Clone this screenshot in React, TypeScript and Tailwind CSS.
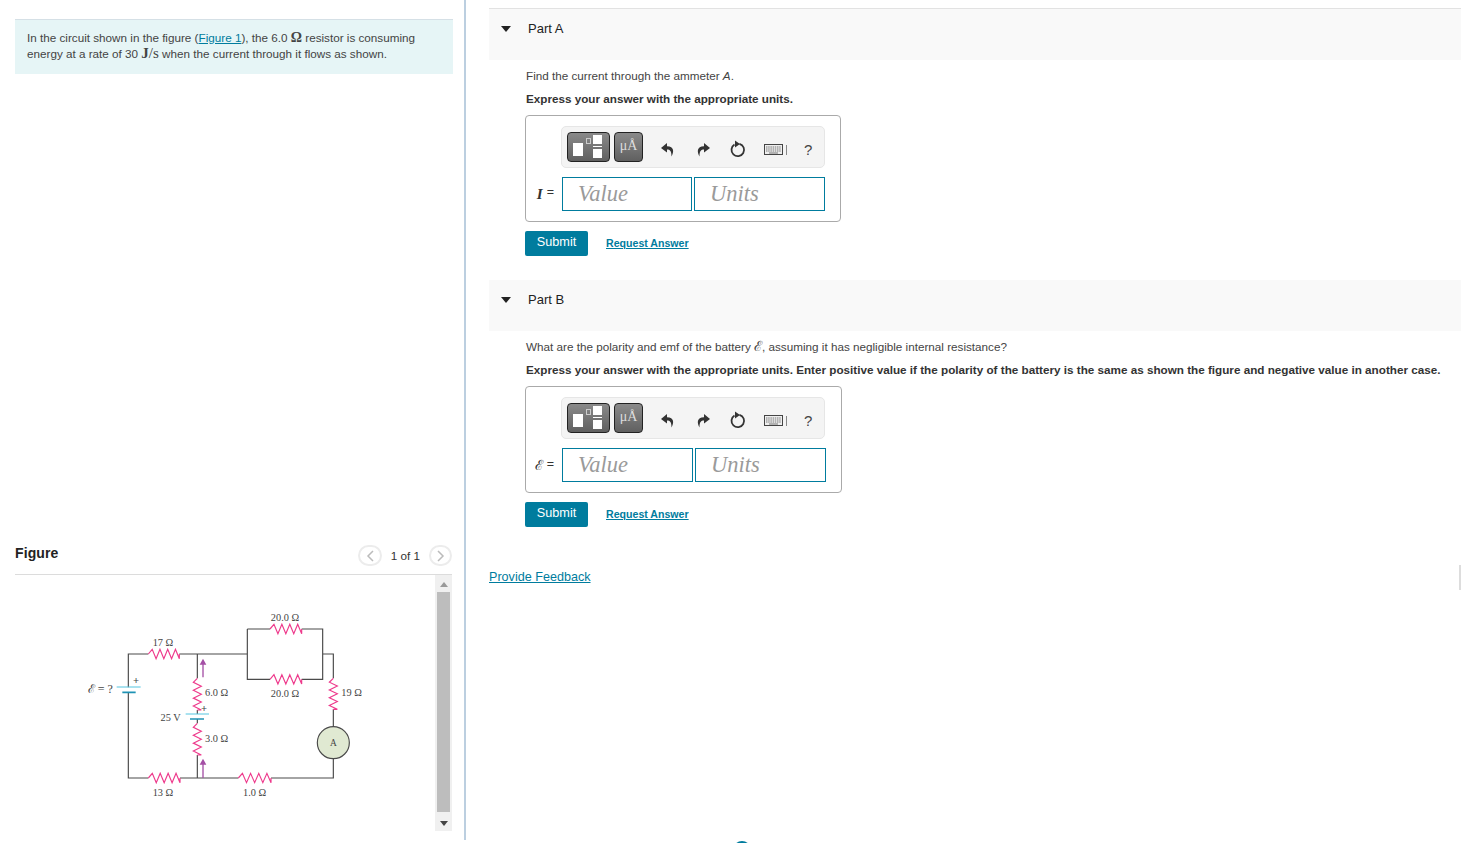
const serif = "[font-family:'Liberation_Serif',serif]";

// zigzag between two points along one axis, 4 peaks like the figure
function zigH(x1: number, x2: number, y: number) {
  const step = (x2 - x1) / 8;
  let d = `M${x1} ${y}`;
  for (let i = 1; i < 8; i += 2) {
    d += ` L${x1 + step * i} ${y - 14} L${x1 + step * (i + 1)} ${y + 14}`;
  }
  return d + ` L${x2} ${y}`;
}

function zigV(x: number, y1: number, y2: number) {
  const step = (y2 - y1) / 8;
  let d = `M${x} ${y1}`;
  for (let i = 1; i < 8; i += 2) {
    d += ` L${x - 12} ${y1 + step * i} L${x + 12} ${y1 + step * (i + 1)}`;
  }
  return d + ` L${x} ${y2}`;
}

function Circuit() {
  const labels: [string, number, number][] = [
    ["20.0 Ω", 645, 62],
    ["17 Ω", 279, 137],
    ["6.0 Ω", 440, 288],
    ["20.0 Ω", 645, 290],
    ["19 Ω", 845, 288],
    ["25 V", 302, 362],
    ["3.0 Ω", 440, 426],
    ["13 Ω", 279, 587],
    ["1.0 Ω", 554, 587],
  ];
  return (
    <svg width="310" height="210" viewBox="0 0 930 630" className="block">
      <path
        d="M175 262V162H235M328 162H532M532 87H600M695 87H758V238H695M600 238H532V87M758 162H790V235M790 328V380M790 476V534H603M505 534H330M235 534H175V277M382 162V235M382 330V342M382 357V370M382 465V534"
        fill="none"
        stroke="#4a4a4a"
        strokeWidth="3.500"
      />
      <g fill="none" stroke="#ee3a8c" strokeWidth="3.500">
        <path d={zigH(235, 328, 162)} />
        <path d={zigH(600, 695, 87)} />
        <path d={zigH(600, 695, 238)} />
        <path d={zigH(235, 330, 534)} />
        <path d={zigH(505, 603, 534)} />
        <path d={zigV(382, 235, 330)} />
        <path d={zigV(382, 370, 465)} />
        <path d={zigV(790, 235, 328)} />
      </g>
      <path d="M140 261H212M347 342H417" stroke="#55c5e0" strokeWidth="3" />
      <path d="M157 277H197M360 357H402" stroke="#1f93b5" strokeWidth="5" />
      <path d="M399 232V182M399 534V482" stroke="#a44fa5" strokeWidth="4" />
      <path d="M399 176L389 194H409ZM399 476L389 494H409Z" fill="#a44fa5" />
      <circle cx="790" cy="428" r="48" fill="#e0e9d2" stroke="#4a4a4a" strokeWidth="3.500" />
      <g fill="#444" className={serif} fontSize="31" textAnchor="middle">
        {labels.map(([t, x, y]) => (
          <text key={t + x} x={x} y={y}>
            {t}
          </text>
        ))}
        <text x="91" y="280" fontSize="36">
          ℰ = ?
        </text>
        <text x="790" y="438" fontSize="28">
          A
        </text>
        <text x="198" y="252" fontWeight="bold" fontSize="32">
          +
        </text>
        <text x="402" y="336" fontWeight="bold" fontSize="32">
          +
        </text>
      </g>
    </svg>
  );
}

function Toolbar() {
  return (
    <div className="ml-[35px] flex h-[42px] w-[264px] items-center rounded-[5px] border border-[#e6e6e6] bg-[#f4f4f4] pl-[5px]">
      <div className="flex h-[30px] w-[43px] items-center justify-center rounded-[4px] border border-[#222] bg-gradient-to-b from-[#8a8a8a] to-[#606060]">
        <svg width="33" height="26" viewBox="0 0 33 26">
          <rect x="1" y="9" width="10" height="13" fill="#fff" />
          <rect x="14.500" y="4.500" width="4" height="5" fill="none" stroke="#ccc" />
          <rect x="21" y="1" width="9" height="9" fill="#fff" />
          <rect x="21" y="12" width="9" height="1" fill="#fff" />
          <rect x="21" y="15" width="9" height="9" fill="#fff" />
        </svg>
      </div>
      <div className={`ml-[4px] flex h-[30px] w-[29px] items-center justify-center rounded-[4px] border border-[#222] bg-gradient-to-b from-[#8a8a8a] to-[#606060] pb-[3px] text-[14px] text-[#ddd] ${serif}`}>
        μÅ
      </div>
      <svg width="14" height="15" viewBox="0 0 14 15" className="ml-[18px] mt-[4px]">
        <path d="M6 1L0 6L6 10.5V7.5C9 7.5 10.5 9 10.5 14.5C13 10 13.500 4.500 6 4.300Z" fill="#333" />
      </svg>
      <svg width="14" height="15" viewBox="0 0 14 15" className="ml-[21px] mt-[4px]">
        <path d="M8 1L14 6L8 10.500V7.500C5 7.500 3.500 9 3.500 14.500C1 10 0.500 4.500 8 4.300Z" fill="#333" />
      </svg>
      <svg width="16" height="18" viewBox="0 0 16 18" className="ml-[20px] mt-[4px]">
        <path d="M9.500 3.800A6.300 6.300 0 1 1 4.500 4.500" fill="none" stroke="#333" strokeWidth="1.800" />
        <path d="M5 0.500L10 4L5 7.500Z" fill="#333" />
      </svg>
      <svg width="19" height="11" viewBox="0 0 19 11" className="ml-[18px] mt-[5px]">
        <rect x="0.500" y="0.500" width="18" height="10" fill="#eee" stroke="#444" />
        <path d="M2 3H17M2 5H17M2 7H17" stroke="#777" strokeDasharray="1.500 0.700" />
        <path d="M5 9H14" stroke="#777" />
      </svg>
      <div className="ml-[3px] mt-[5px] h-[10px] w-px bg-[#888]" />
      <div className="ml-[17px] mt-[4px] text-[15px] leading-none text-[#444]">?</div>
    </div>
  );
}

function Part(props: { name: string; wide?: boolean; question: React.ReactNode; instruction: string; symbol: React.ReactNode }) {
  const inputClass = `flex h-[34px] items-center border border-[#007c9e] pl-[15px] text-[22.500px] italic text-[#9a9a9a] ${serif}`;
  return (
    <div className="h-[271px]">
      <div className="flex h-[51px] items-start bg-[#f9f9f9] pl-[12px] pt-[12px]">
        <svg width="10" height="6" viewBox="0 0 10 6" className="mt-[5px]">
          <path d="M0 0H10L5 6Z" fill="#222" />
        </svg>
        <span className="ml-[17px] text-[13px] leading-[16px] text-[#222]">{props.name}</span>
      </div>
      <p className="ml-[37px] mt-[9px] whitespace-nowrap text-[11.700px] leading-[14px] text-[#444]">{props.question}</p>
      <p className="ml-[37px] mt-[9px] whitespace-nowrap text-[11.700px] font-bold leading-[14px] text-[#333]">{props.instruction}</p>
      <div className={`ml-[36px] mt-[9px] h-[107px] rounded-[4px] border border-[#aaa] pt-[10px] ${props.wide ? "w-[317px]" : "w-[316px]"}`}>
        <Toolbar />
        <div className="mt-[9px] flex items-center">
          <span className="flex w-[36px] justify-end pr-[8px] text-[12.500px] text-[#333]">{props.symbol}</span>
          <div className={`${inputClass} ${props.wide ? "w-[131px]" : "w-[130px]"}`}>Value</div>
          <div className={`${inputClass} ml-[2px] w-[131px]`}>Units</div>
        </div>
      </div>
      <div className="ml-[36px] mt-[9px] flex items-center">
        <div className="flex h-[25px] w-[63px] items-center justify-center rounded-[2px] bg-[#007c9e] pb-[1px] text-[12.700px] font-medium text-white">Submit</div>
        <a className="ml-[18px] text-[10.600px] font-bold text-[#007c9e] underline">Request Answer</a>
      </div>
    </div>
  );
}

export default function App() {
  return (
    <div className="relative flex h-[843px] w-[1461px] overflow-hidden bg-white [font-family:'Liberation_Sans',Arial,sans-serif]">
      <div className="h-[840px] w-[466px] shrink-0 border-r-2 border-[#bccfe0] pl-[15px] pr-[12px] pt-[19px]">
        <div className="-mr-[1px] h-[55px] border-t border-[#d5e0e6] bg-[#e6f5f6] pl-[12px] pt-[10px] text-[11.700px] leading-[16px] text-[#444]">
          In the circuit shown in the figure (<a className="text-[#007c9e] underline">Figure 1</a>), the 6.0 <span className={`text-[14px] leading-none font-bold ${serif}`}>Ω</span> resistor is consuming
          <br />
          energy at a rate of 30 <span className={`text-[15px] leading-none ${serif}`}><b>J</b>/s</span> when the current through it flows as shown.
        </div>
        <div className="mt-[466px] flex h-[35px] items-start border-b border-[#dcdcdc]">
          <span className="mt-[5px] text-[14px] font-bold leading-[16px] tracking-[0.100px] text-[#222]">Figure</span>
          <div className="ml-auto mt-[5px] flex items-center">
            <div className="flex h-[21px] w-[24px] items-center justify-center rounded-full border-2 border-[#ececec]">
              <svg width="8" height="12" viewBox="0 0 8 12">
                <path d="M7 1L2 6L7 11" fill="none" stroke="#bbb" strokeWidth="1.500" />
              </svg>
            </div>
            <span className="ml-[9px] mr-[9px] mt-[1px] text-[11.700px] text-[#333]">1 of 1</span>
            <div className="flex h-[21px] w-[23px] items-center justify-center rounded-full border-2 border-[#ececec]">
              <svg width="8" height="12" viewBox="0 0 8 12">
                <path d="M1 1L6 6L1 11" fill="none" stroke="#bbb" strokeWidth="1.500" />
              </svg>
            </div>
          </div>
        </div>
        <div className="flex h-[256px]">
          <div className="flex-1 pl-[55px] pt-[25px]">
            <Circuit />
          </div>
          <div className="flex h-full w-[17px] flex-col items-center bg-[#f0f0f0]">
            <svg width="8" height="5" viewBox="0 0 8 5" className="mt-[7px]">
              <path d="M0 5H8L4 0Z" fill="#999" />
            </svg>
            <div className="mt-[5px] h-[220px] w-[13px] bg-[#bdbdbd]" />
            <svg width="8" height="5" viewBox="0 0 8 5" className="mt-[9px]">
              <path d="M0 0H8L4 5Z" fill="#444" />
            </svg>
          </div>
        </div>
      </div>
      <div className="flex-1 pl-[23px] pt-[8px]">
        <div className="border-t border-[#e2e2e2]">
          <Part
            name="Part A"
            question={
              <>
                Find the current through the ammeter <i>A</i>.
              </>
            }
            instruction="Express your answer with the appropriate units."
            symbol={
              <>
                <i className={`mr-[4px] text-[15px] font-bold ${serif}`}>I</i>=
              </>
            }
          />
          <Part
            name="Part B"
            wide
            question={
              <>
                What are the polarity and emf of the battery <span className={`text-[14px] leading-none ${serif}`}>ℰ</span>, assuming it has negligible internal resistance?
              </>
            }
            instruction="Express your answer with the appropriate units. Enter positive value if the polarity of the battery is the same as shown the figure and negative value in another case."
            symbol={
              <>
                <span className={`mr-[4px] text-[14px] ${serif}`}>ℰ</span>=
              </>
            }
          />
        </div>
        <a className="mt-[17px] block text-[12.600px] leading-[18px] text-[#007c9e] underline">Provide Feedback</a>
      </div>
      <div className="absolute right-0 top-[565px] h-[25px] w-[2px] bg-[#ddd]" />
      <div className="absolute left-[733px] top-[841px] h-[18px] w-[18px] rounded-full bg-[#007c9e]" />
    </div>
  );
}
